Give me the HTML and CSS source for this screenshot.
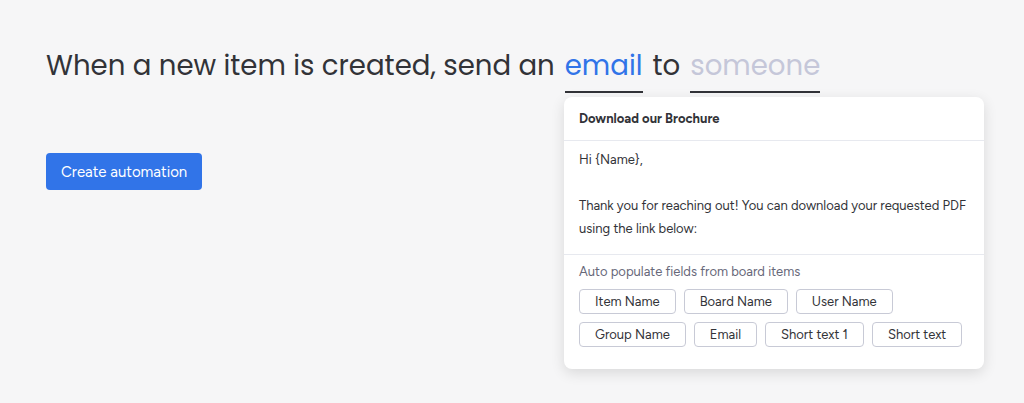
FILE: index.html
```html
<!DOCTYPE html>
<html>
<head>
<meta charset="utf-8">
<link rel="stylesheet" href="styles.css">
</head>
<body>
<div class="page">
  <h1 class="sentence">
    <span>When a new item is created, send an</span>
    <span class="slot slot-email">email</span>
    <span>to</span>
    <span class="slot slot-someone">someone</span>
  </h1>
  <button class="create-btn">Create automation</button>

  <div class="popover">
    <div class="pop-head">Download our Brochure</div>
    <div class="pop-body">
      <p>Hi {Name},</p>
      <p>&nbsp;</p>
      <p>Thank you for reaching out! You can download your requested PDF using the link below:</p>
    </div>
    <div class="pop-foot">
      <div class="pop-label">Auto populate fields from board items</div>
      <div class="chips">
        <span class="chip">Item Name</span>
        <span class="chip">Board Name</span>
        <span class="chip">User Name</span>
        <span class="chip">Group Name</span>
        <span class="chip">Email</span>
        <span class="chip">Short text 1</span>
        <span class="chip">Short text</span>
      </div>
    </div>
  </div>
</div>
</body>
</html>
```

FILE: styles.css
```css
html, body {
  margin: 0;
  padding: 0;
  background: #f6f6f7;
  height: 100%;
}
.page {
  position: relative;
  padding: 45px 46px 0;
  height: 403px;
  box-sizing: border-box;
  font-family: "Figtree", "Inter", "Liberation Sans", sans-serif;
}
.sentence {
  margin: 0;
  display: flex;
  align-items: baseline;
  gap: 0 10px;
  font-family: "Poppins", "Open Sans", "DejaVu Sans", sans-serif;
  font-weight: 400;
  font-size: 27.6px;
  line-height: 42px;
  color: #323338;
}
.slot {
  border-bottom: 2px solid #323338;
  padding-bottom: 4px;
}
.slot-email {
  color: #3174e8;
}
.slot-someone {
  color: #c5c7d9;
}
.create-btn {
  display: block;
  margin-top: 60px;
  margin-left: 0;
  height: 37px;
  padding: 0 15px;
  border: none;
  border-radius: 4px;
  background: #3174e8;
  color: #fff;
  font-family: "Figtree", "Inter", "Liberation Sans", sans-serif;
  font-size: 15px;
}
.popover {
  position: absolute;
  left: 564px;
  top: 97px;
  width: 420px;
  background: #fff;
  border-radius: 8px;
  box-shadow: 0 4px 14px rgba(0, 0, 0, 0.12);
  color: #323338;
  font-size: 13px;
}
.pop-head {
  height: 43px;
  display: flex;
  align-items: center;
  padding: 0 15px;
  font-weight: 700;
  border-bottom: 1px solid #e7e9ef;
}
.pop-body {
  padding: 7px 15px 14px;
  line-height: 23px;
  border-bottom: 1px solid #e7e9ef;
}
.pop-body p {
  margin: 0;
}
.pop-foot {
  padding: 9px 15px 22px;
}
.pop-label {
  color: #676879;
  line-height: 16px;
  margin-bottom: 9px;
}
.chips {
  display: flex;
  flex-wrap: wrap;
  gap: 8px;
  width: 400px;
}
.chip {
  height: 25px;
  box-sizing: border-box;
  padding: 0 15px;
  display: flex;
  align-items: center;
  border: 1px solid #c8cad6;
  border-radius: 4px;
  color: #323338;
}
```
